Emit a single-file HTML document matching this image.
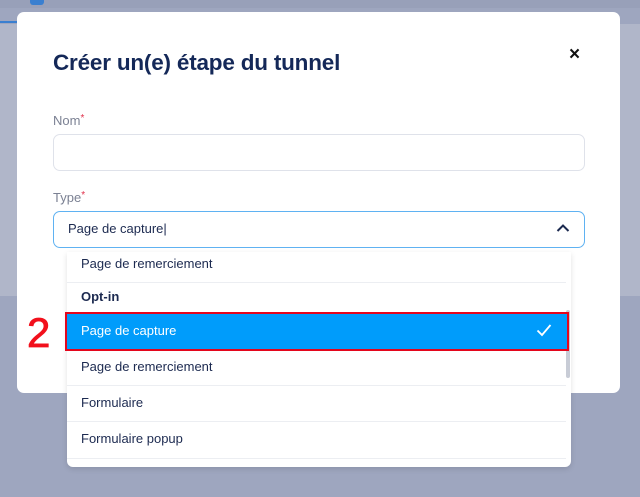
<!DOCTYPE html>
<html><head><meta charset="utf-8"><style>
*{margin:0;padding:0;box-sizing:border-box}
body{width:640px;height:497px;overflow:hidden;background:#9ea6bf;font-family:"Liberation Sans",sans-serif;position:relative}
.abs{position:absolute}
.modal{left:17px;top:12px;width:603px;height:381px;background:#fff;border-radius:7px}
.title{left:53px;top:50px;font-size:22.5px;font-weight:bold;color:#142858;letter-spacing:-0.2px}
.lbl{font-size:13px;color:#7b8193}
.lbl b{color:#e0304a;font-weight:normal;font-size:10px;vertical-align:top}
.inp{left:53px;width:532px;height:37px;border:1px solid #dfe2ea;border-radius:7px}
.sel{border-color:#5fb2f2;top:211px;}
.dd{left:67px;top:252px;width:504px;height:215px;background:#fff;border-radius:0 0 6px 6px;box-shadow:0 2px 6px rgba(0,0,0,.12);overflow:hidden}
.it{position:absolute;left:0;width:499px;border-bottom:1px solid #eceef2;font-size:13px;color:#1c2a50;padding-left:14px}
</style></head><body>
<div class="abs" style="left:0;top:0;width:640px;height:8px;background:#98a0b9"></div>
<div class="abs" style="left:30px;top:0;width:14px;height:5px;background:#3a7fd0;border-radius:0 0 3px 3px"></div>
<div class="abs" style="left:0;top:21px;width:17px;height:2px;background:#3a7fd0"></div>
<div class="abs" style="left:0;top:24px;width:17px;height:272px;background:#b0b6c9"></div>
<div class="abs" style="left:620px;top:24px;width:20px;height:272px;background:#b0b6c9"></div>
<div class="abs modal"></div>
<div class="abs title">Créer un(e) étape du tunnel</div>
<div class="abs" style="left:569px;top:44px;font-size:19px;font-weight:bold;color:#111">×</div>
<div class="abs lbl" style="left:53px;top:113px">Nom<b>*</b></div>
<div class="abs inp" style="top:134px"></div>
<div class="abs lbl" style="left:53px;top:190px">Type<b>*</b></div>
<div class="abs inp sel"></div>
<div class="abs" style="left:68px;top:221px;font-size:13px;color:#1c2a50">Page de capture|</div>
<svg class="abs" style="left:556px;top:223px" width="14" height="10" viewBox="0 0 14 10"><path d="M1.5 8 L7 2.5 L12.5 8" fill="none" stroke="#1c2a50" stroke-width="2"/></svg>
<div class="abs dd">
<div class="it" style="top:0;height:31px;line-height:24px">Page de remerciement</div>
<div class="it" style="top:31px;height:30px;line-height:28px;font-weight:bold">Opt-in</div>
<div class="it" style="top:99px;height:35px;line-height:32px">Page de remerciement</div>
<div class="it" style="top:134px;height:36px;line-height:34px">Formulaire</div>
<div class="it" style="top:170px;height:37px;line-height:34px">Formulaire popup</div>
<div class="abs" style="left:499px;top:58px;width:4px;height:68px;background:#c8ccd6;border-radius:2px"></div>
</div>
<div class="abs" style="left:65px;top:312px;width:504px;height:39px;background:#009cfb;border:2px solid #e4061c"></div>
<div class="abs" style="left:81px;top:323px;font-size:13px;color:#fff">Page de capture</div>
<svg class="abs" style="left:536px;top:323px" width="16" height="14" viewBox="0 0 16 14"><path d="M1.5 7.5 L6 12 L14.5 2" fill="none" stroke="#fff" stroke-width="1.8"/></svg>
<div class="abs" style="left:27px;top:309px;font-size:42px;color:#f2101c;line-height:48px;-webkit-text-stroke:0.8px #f2101c">2</div>
</body></html>
